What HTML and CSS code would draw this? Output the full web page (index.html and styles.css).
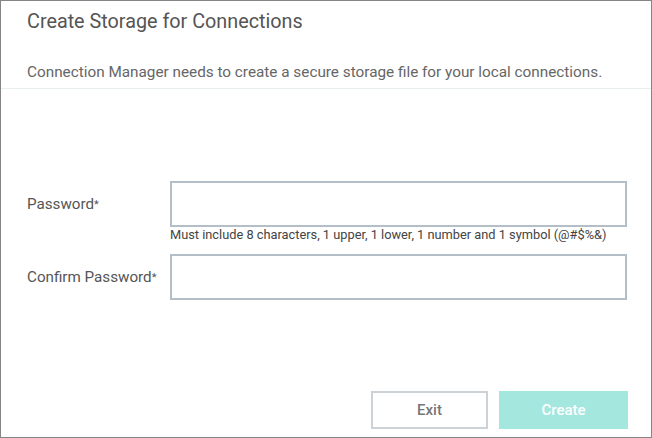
FILE: index.html
```html
<!DOCTYPE html>
<html>
<head>
<meta charset="utf-8">
<link rel="stylesheet" href="styles.css">
</head>
<body>
<div class="dialog">
  <div class="header">
    <h1 class="title">Create Storage for Connections</h1>
    <p class="subtitle">Connection Manager needs to create a secure storage file for your local connections.</p>
  </div>
  <div class="form">
    <div class="field">
      <label class="label">Password<span class="req">*</span></label>
      <input class="input" type="password">
    </div>
    <div class="hint">Must include 8 characters, 1 upper, 1 lower, 1 number and 1 symbol (@#$%&amp;)</div>
    <div class="field field-second">
      <label class="label">Confirm Password<span class="req">*</span></label>
      <input class="input" type="password">
    </div>
  </div>
  <div class="footer">
    <button class="btn btn-exit">Exit</button>
    <button class="btn btn-create">Create</button>
  </div>
</div>
</body>
</html>
```

FILE: styles.css
```css
html, body {
  margin: 0;
  padding: 0;
  background: #fff;
}
body {
  font-family: Roboto, "Liberation Sans", sans-serif;
}
.dialog {
  width: 652px;
  height: 438px;
  box-sizing: border-box;
  border: 1px solid #858585;
  display: flex;
  flex-direction: column;
  background: #fff;
}
.header {
  padding: 9px 0 6px 26px;
  border-bottom: 1px solid #e9eeee;
}
.title {
  margin: 0;
  font-size: 19.8px;
  line-height: 24px;
  font-weight: 400;
  color: #555;
}
.subtitle {
  margin: 28px 0 0 0;
  font-size: 15.3px;
  line-height: 20px;
  color: #666;
}
.form {
  margin-top: 92px;
  padding-left: 26px;
}
.field {
  display: flex;
  align-items: center;
}
.field-second {
  margin-top: 11px;
}
.label {
  width: 143px;
  font-size: 15.2px;
  color: #555;
}
.req {
  font-size: 11px;
  vertical-align: 1px;
}
.input {
  width: 457px;
  height: 46px;
  box-sizing: border-box;
  border: 2px solid #b3bec6;
  margin: 0;
  padding: 0 8px;
  outline: none;
  background: #fff;
}
.hint {
  margin-left: 143px;
  font-size: 12.8px;
  line-height: 16px;
  color: #444;
}
.footer {
  margin-top: auto;
  display: flex;
  justify-content: flex-end;
  gap: 11px;
  padding: 0 23px 8px 0;
}
.btn {
  height: 38px;
  box-sizing: border-box;
  font-family: Roboto, "Liberation Sans", sans-serif;
  font-size: 15px;
  font-weight: 500;
  margin: 0;
  padding: 0;
  cursor: pointer;
}
.btn-exit {
  width: 117px;
  background: #fff;
  border: 2px solid #cdd2d6;
  color: #777;
}
.btn-create {
  width: 129px;
  background: #a3e7df;
  border: none;
  color: #fff;
}
```
